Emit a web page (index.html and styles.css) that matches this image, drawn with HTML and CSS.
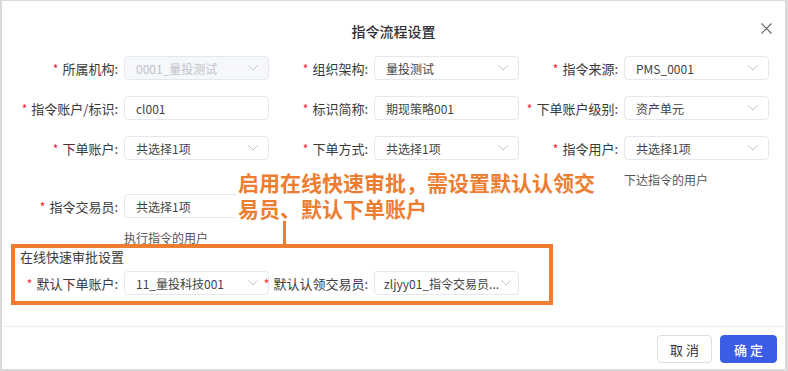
FILE: index.html
```html
<!DOCTYPE html>
<html lang="zh-CN">
<head>
    <meta charset="UTF-8">
    <meta name="viewport" content="width=device-width, initial-scale=1.0">
    <title>指令流程设置</title>
    <link rel="stylesheet" href="styles.css">
</head>
<body>

<div class="modal">
    <div class="modal-header">
        <span class="modal-title">指令流程设置</span>
        <span class="modal-close">
            <svg width="11" height="11" viewBox="0 0 11 11"><path d="M0.5 0.5l10 10M10.5 0.5l-10 10" stroke="#666" stroke-width="1.1" fill="none"/></svg>
        </span>
    </div>

    <div class="modal-body">
        <div class="form-row">
            <div class="form-item">
                <label class="form-label"><i class="required">*</i>所属机构:</label>
                <div class="form-control">
                    <div class="select is-disabled">
                        <span class="select-value">0001_量投测试</span>
                        <svg class="arrow" width="10" height="6" viewBox="0 0 10 6"><path d="M0.5 0.5l4.5 4.5 4.5-4.5" stroke="#c0c4cc" fill="none"/></svg>
                    </div>
                </div>
            </div>
            <div class="form-item">
                <label class="form-label"><i class="required">*</i>组织架构:</label>
                <div class="form-control">
                    <div class="select">
                        <span class="select-value">量投测试</span>
                        <svg class="arrow" width="10" height="6" viewBox="0 0 10 6"><path d="M0.5 0.5l4.5 4.5 4.5-4.5" stroke="#c0c4cc" fill="none"/></svg>
                    </div>
                </div>
            </div>
            <div class="form-item">
                <label class="form-label"><i class="required">*</i>指令来源:</label>
                <div class="form-control">
                    <div class="select">
                        <span class="select-value">PMS_0001</span>
                        <svg class="arrow" width="10" height="6" viewBox="0 0 10 6"><path d="M0.5 0.5l4.5 4.5 4.5-4.5" stroke="#c0c4cc" fill="none"/></svg>
                    </div>
                </div>
            </div>
        </div>

        <div class="form-row">
            <div class="form-item">
                <label class="form-label"><i class="required">*</i>指令账户/标识:</label>
                <div class="form-control">
                    <div class="select"><span class="select-value">cl001</span></div>
                </div>
            </div>
            <div class="form-item">
                <label class="form-label"><i class="required">*</i>标识简称:</label>
                <div class="form-control">
                    <div class="select"><span class="select-value">期现策略001</span></div>
                </div>
            </div>
            <div class="form-item">
                <label class="form-label"><i class="required">*</i>下单账户级别:</label>
                <div class="form-control">
                    <div class="select">
                        <span class="select-value">资产单元</span>
                        <svg class="arrow" width="10" height="6" viewBox="0 0 10 6"><path d="M0.5 0.5l4.5 4.5 4.5-4.5" stroke="#c0c4cc" fill="none"/></svg>
                    </div>
                </div>
            </div>
        </div>

        <div class="form-row with-help">
            <div class="form-item">
                <label class="form-label"><i class="required">*</i>下单账户:</label>
                <div class="form-control">
                    <div class="select">
                        <span class="select-value">共选择1项</span>
                        <svg class="arrow" width="10" height="6" viewBox="0 0 10 6"><path d="M0.5 0.5l4.5 4.5 4.5-4.5" stroke="#c0c4cc" fill="none"/></svg>
                    </div>
                </div>
            </div>
            <div class="form-item">
                <label class="form-label"><i class="required">*</i>下单方式:</label>
                <div class="form-control">
                    <div class="select">
                        <span class="select-value">共选择1项</span>
                        <svg class="arrow" width="10" height="6" viewBox="0 0 10 6"><path d="M0.5 0.5l4.5 4.5 4.5-4.5" stroke="#c0c4cc" fill="none"/></svg>
                    </div>
                </div>
            </div>
            <div class="form-item">
                <label class="form-label"><i class="required">*</i>指令用户:</label>
                <div class="form-control">
                    <div class="select">
                        <span class="select-value">共选择1项</span>
                        <svg class="arrow" width="10" height="6" viewBox="0 0 10 6"><path d="M0.5 0.5l4.5 4.5 4.5-4.5" stroke="#c0c4cc" fill="none"/></svg>
                    </div>
                    <div class="form-help">下达指令的用户</div>
                </div>
            </div>
        </div>

        <div class="form-row last">
            <div class="form-item">
                <label class="form-label"><i class="required">*</i>指令交易员:</label>
                <div class="form-control">
                    <div class="select"><span class="select-value">共选择1项</span></div>
                    <div class="form-help tight">执行指令的用户</div>
                </div>
            </div>
        </div>

        <div class="approve-section">
            <div class="section-title">在线快速审批设置</div>
            <div class="form-row last">
                <div class="form-item">
                    <label class="form-label"><i class="required">*</i>默认下单账户:</label>
                    <div class="form-control">
                        <div class="select">
                            <span class="select-value">11_量投科技001</span>
                            <svg class="arrow" width="10" height="6" viewBox="0 0 10 6"><path d="M0.5 0.5l4.5 4.5 4.5-4.5" stroke="#c0c4cc" fill="none"/></svg>
                        </div>
                    </div>
                </div>
                <div class="form-item">
                    <label class="form-label"><i class="required">*</i>默认认领交易员:</label>
                    <div class="form-control">
                        <div class="select compact">
                            <span class="select-value">zljyy01_指令交易员...</span>
                            <svg class="arrow" width="10" height="6" viewBox="0 0 10 6"><path d="M0.5 0.5l4.5 4.5 4.5-4.5" stroke="#c0c4cc" fill="none"/></svg>
                        </div>
                    </div>
                </div>
            </div>
        </div>
    </div>

    <div class="modal-footer">
        <button class="btn">取 消</button>
        <button class="btn btn-primary">确 定</button>
    </div>

    <!-- annotation over the form -->
    <div class="callout">启用在线快速审批，需设置默认认领交<br>易员、默认下单账户</div>
</div>

</body>
</html>
```

FILE: styles.css
```css
body {
    margin: 0;
    padding: 1px 3px 2px 2px;
    background-color: #d9d9d9;
    font-family: "Noto Sans CJK SC", "Noto Sans", sans-serif;
    color: #333;
}
.modal {
    position: relative;
    width: 783px;
    height: 368px;
    background-color: #ffffff;
    display: flex;
    flex-direction: column;
}
.modal-header {
    position: relative;
    padding-top: 17px;
    height: 20px;
    text-align: center;
}
.modal-title {
    font-size: 14px;
    line-height: 20px;
    font-weight: 500;
    color: #303133;
}
.modal-close {
    position: absolute;
    right: 13px;
    top: 22px;
    line-height: 0;
}
.modal-body {
    flex: 1;
    padding: 18px 0 0 17px;
}
.form-row {
    display: flex;
    margin-bottom: 16px;
}
.form-row.with-help {
    margin-bottom: 5px;
}
.form-row.last {
    margin-bottom: 0;
}
.form-item {
    display: flex;
    align-items: flex-start;
    width: 250px;
}
.form-label {
    width: 105px;
    flex-shrink: 0;
    display: flex;
    justify-content: flex-end;
    align-items: center;
    height: 24px;
    padding-right: 6px;
    box-sizing: border-box;
    font-size: 13px;
    white-space: nowrap;
    color: #3a3a3a;
}
.required {
    font-style: normal;
    color: #f5222d;
    font-size: 12px;
    margin-right: 4px;
}
.form-control {
    width: 145px;
}
.select {
    display: flex;
    align-items: center;
    height: 24px;
    padding: 0 10px 0 11px;
    border: 1px solid #e4e7ed;
    border-radius: 4px;
    box-sizing: border-box;
    background-color: #ffffff;
}
.select.compact {
    padding-left: 9px;
    padding-right: 11px;
}
.select.is-disabled {
    background-color: #f5f7fa;
}
.select-value {
    flex: 1;
    font-size: 12px;
    color: #444;
    white-space: nowrap;
}
.is-disabled .select-value {
    color: #bfc3ca;
}
.arrow {
    flex-shrink: 0;
    margin-left: 2px;
}
.form-help {
    margin-top: 11px;
    font-size: 12px;
    line-height: 18px;
    color: #555;
    white-space: nowrap;
}
.form-help.tight {
    margin-top: 14px;
    line-height: 12px;
}
.approve-section {
    width: 542px;
    margin-left: -8px;
    padding: 0 0 6px 4px;
    border: 4px solid #ed7d31;
    box-sizing: border-box;
}
.section-title {
    padding-left: 1px;
    font-size: 13px;
    line-height: 18px;
    margin-bottom: 5px;
    color: #3a3a3a;
}
.modal-footer {
    display: flex;
    justify-content: flex-end;
    gap: 8px;
    padding: 8px 8px 6px 0;
    border-top: 1px solid #ebeef5;
}
.btn {
    height: 28px;
    width: 55px;
    padding: 0;
    border: 1px solid #dcdfe6;
    border-radius: 4px;
    background-color: #ffffff;
    font-family: inherit;
    font-size: 13px;
    color: #333;
    cursor: pointer;
}
.btn-primary {
    width: 57px;
    border-color: #3a5ce6;
    background-color: #3a5ce6;
    color: #ffffff;
    font-weight: 500;
}
.callout {
    position: absolute;
    left: 234px;
    top: 168px;
    padding: 0 2px;
    background-color: #ffffff;
    font-size: 21px;
    line-height: 26px;
    font-weight: 700;
    color: #ed7d31;
    white-space: nowrap;
}
.callout::after {
    content: "";
    position: absolute;
    left: 47px;
    top: 100%;
    width: 3px;
    height: 23px;
    background-color: #ed7d31;
}
```
